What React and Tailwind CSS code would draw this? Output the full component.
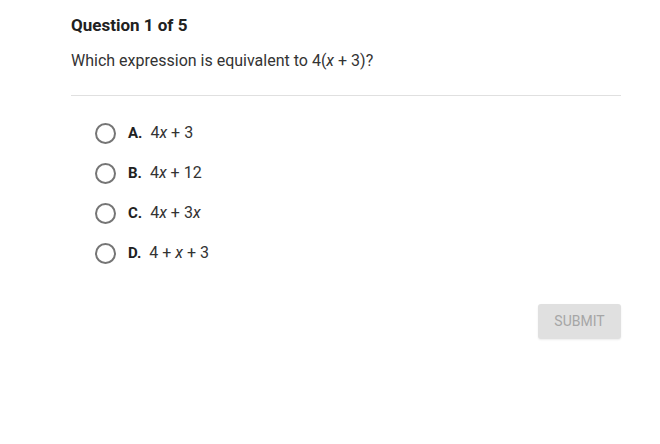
export default function App() {
  const opts = [
    { l: "A.", e: <><span>4</span><i>x</i><span> + 3</span></> },
    { l: "B.", e: <><span>4</span><i>x</i><span> + 12</span></> },
    { l: "C.", e: <><span>4</span><i>x</i><span> + 3</span><i>x</i></> },
    { l: "D.", e: <><span>4 + </span><i>x</i><span> + 3</span></> },
  ];
  return (
    <div className="w-[660px] h-[444px] bg-white px-[71px] pt-[13px] font-['Roboto',sans-serif] text-[#212121]">
      <div className="text-[17px] font-bold leading-[24px]">Question 1 of 5</div>
      <div className="mt-[13px] text-[16px] leading-[22px] text-[#333]">
        Which expression is equivalent to 4(<i>x</i> + 3)?
      </div>
      <div className="mt-[23px] border-t border-[#e0e0e0] w-[550px]" />
      <div className="mt-[26px] pl-[24px] flex flex-col gap-[18px]">
        {opts.map((o) => (
          <div key={o.l} className="flex items-center h-[22px]">
            <div className="w-[21px] h-[21px] rounded-full border-2 border-[#757575]" />
            <span className="ml-[12px] text-[15px] font-bold text-[#212121]">{o.l}</span>
            <span className="ml-[8px] text-[16px] text-[#333]">{o.e}</span>
          </div>
        ))}
      </div>
      <div className="mt-[40px] w-[550px] flex justify-end">
        <div className="w-[83px] h-[35px] rounded-[3px] bg-[#e0e0e0] text-[#a6a6a6] text-[14px] flex items-center justify-center shadow-[0_1px_2px_rgba(0,0,0,0.08)]">
          SUBMIT
        </div>
      </div>
    </div>
  );
}
